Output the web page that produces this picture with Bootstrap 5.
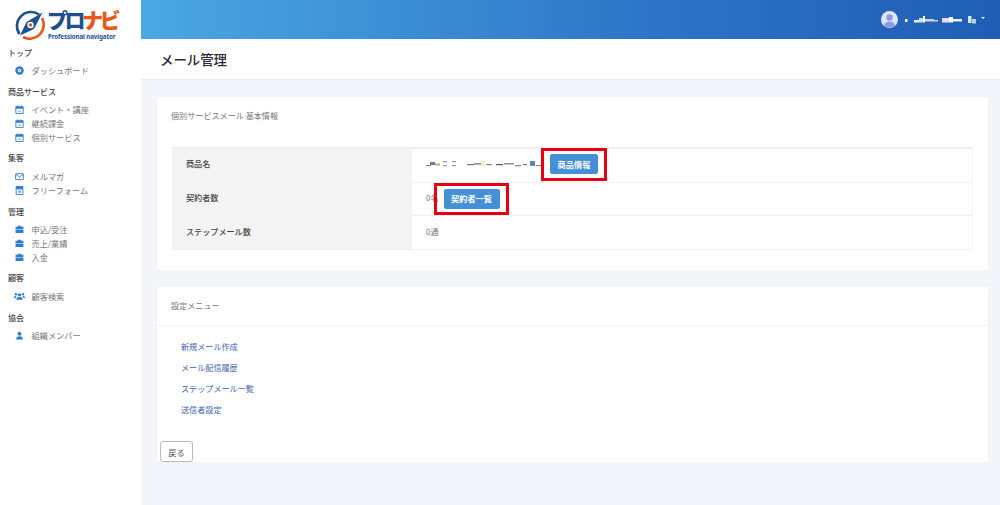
<!DOCTYPE html>
<html lang="ja">
<head>
<meta charset="utf-8">
<title>メール管理</title>
<link rel="stylesheet" href="https://cdn.jsdelivr.net/npm/bootstrap@5.3.0/dist/css/bootstrap.min.css">
<style>
html,body{height:100%;}
body{font-family:"Noto Sans CJK JP","Noto Sans",sans-serif;font-size:8.2px;background:#f3f5fa;color:#555;overflow:hidden;}
.shell{height:505px;}
.side{width:141px;flex:none;background:#fff;height:505px;}
.logo-wrap{height:46px;padding:9px 0 0 15px;}
.sec-title{height:14px;line-height:14px;padding-left:8px;color:#444;font-size:8px;font-weight:500;margin-bottom:3px;}
.sec-title.wide-gap{margin-bottom:4px;}
.sec{margin-bottom:7px;}
.sec.wide-sec{margin-bottom:8px;}
.side-item{height:14px;line-height:14px;padding-left:15px;color:#777;font-size:8.2px;}
.side-item svg{width:9px;height:9px;margin-right:7.5px;flex:none;}
.main-area{min-width:0;}
.topbar{height:39px;background:linear-gradient(90deg,#4aa8e2 0%,#2d74c6 60%,#1f5db5 100%);padding-right:15px;}
.pagehead{height:41px;background:#fff;padding-left:19px;border-bottom:1px solid #eceef3;}
.pagehead h1{font-size:13.4px;margin:0;color:#2a2a3c;font-weight:500;}
.panel{background:#fff;margin:0 12px 0 16px;border:0;border-radius:0;box-shadow:0 0 3px rgba(0,0,0,.03);position:relative;}
.panel-a{margin-top:17px;height:173px;padding:12px 15px 0;}
.panel-b{margin-top:17px;height:175px;}
.panel-cap{color:#777;font-size:8.1px;line-height:14px;margin-left:-1px;}
.info-tbl{margin:24px 0 0;width:801px;font-size:8.1px;border-top:2px solid #eee;border-bottom:1px solid #eee;}
.info-tbl th,.info-tbl td{height:34px;padding:0 0 0 14px;vertical-align:middle;border-bottom:1px solid #f0f0f0;color:#777;font-weight:400;box-shadow:none;}
.info-tbl tr:first-child th,.info-tbl tr:first-child td{padding-bottom:2px;}
.info-tbl tr:nth-child(2) th,.info-tbl tr:nth-child(2) td{height:33px;}
.info-tbl th{width:240px;background:#f4f4f4;color:#444;font-weight:500;border-bottom:0;}
.info-tbl tr td:last-child{border-right:1px solid #f3f3f3;}
.act-btn{background:#448fd6;border:1px solid #448fd6;color:#fff;font-size:8.2px;font-weight:700;padding:0;width:48px;height:20px;line-height:17px;border-radius:2px;margin-left:5px;}
.act-wide{width:56px;}
.blur-name{width:119px;height:12px;}
.hilite{position:absolute;border:3px solid #e60012;pointer-events:none;}
.h1box{left:384px;top:51px;width:66px;height:33px;}
.h2box{left:277px;top:86px;width:75px;height:32px;}
.cap-b{height:39px;padding-left:14px;border-bottom:1px solid #f3f3f5;line-height:38px;color:#777;font-size:8.1px;}
.link-col{padding:10px 0 0 24px;}
.link-col a{display:block;height:21px;line-height:21px;color:#3d62ae;text-decoration:none;font-size:8.1px;}
.back-btn{position:absolute;left:3px;top:154px;width:33px;height:21px;padding:0;background:#fff;border:1px solid #bbb;border-radius:3px;color:#555;font-size:8.2px;line-height:18px;}
.user-name{width:72px;height:10px;margin:0 4px 0 7px;}
.caret-s{width:0;height:0;border-left:2.5px solid transparent;border-right:2.5px solid transparent;border-top:2.5px solid #fff;margin-bottom:3px;}
.logo-text{line-height:1;margin-left:2px;}
.logo-main{font-family:"Noto Sans CJK JP",sans-serif;font-weight:900;font-size:21px;letter-spacing:-3.4px;line-height:21px;height:21px;white-space:nowrap;margin-left:-1px;}
.logo-main .c1{color:#1d4f91;}
.logo-main .c2{color:#e8561a;}
.logo-sub{font-family:"Noto Sans","Liberation Sans",sans-serif;font-size:6.2px;font-weight:700;color:#1d4f91;line-height:8px;white-space:nowrap;letter-spacing:-.1px;margin-top:3px;}
</style>
</head>
<body>
<div class="shell d-flex">
  <aside class="side">
    <div class="logo-wrap d-flex align-items-start">
      <svg width="31" height="31" viewBox="0 0 31 31">
        <path d="M24 5.500A14 14 0 0 0 4.500 25" fill="none" stroke="#1d4f91" stroke-width="2.600"/>
        <path d="M27 9A14 14 0 0 1 8 28" fill="none" stroke="#e8561a" stroke-width="2.600"/>
        <polygon points="27.500,3.500 19,20 11.500,13" fill="#1d4f91"/>
        <polygon points="19,20 11.500,13 5,26.500" fill="#1d4f91"/>
        <circle cx="15.500" cy="16" r="3.200" fill="#fff"/>
        <circle cx="15.500" cy="16" r="1.800" fill="#e8561a"/>
      </svg>
      <div class="logo-text">
        <div class="logo-main"><span class="c1">プロ</span><span class="c2">ナビ</span></div>
        <div class="logo-sub">Professional navigator</div>
      </div>
    </div>
    <div class="sec wide-sec"><div class="sec-title">トップ</div>
      <div class="side-item d-flex align-items-center"><svg viewBox="0 0 16 16"><circle cx="8" cy="8" r="7.500" fill="#2f7fd1"/><circle cx="8" cy="8" r="3" fill="#fff"/><circle cx="8" cy="8" r="1.200" fill="#2f7fd1"/></svg>ダッシュボード</div>
    </div>
    <div class="sec"><div class="sec-title">商品サービス</div>
      <div class="side-item d-flex align-items-center"><svg viewBox="0 0 16 16"><path d="M1.500 3h13v12h-13z" fill="none" stroke="#2f7fd1" stroke-width="1.600"/><path d="M1.500 3h13v3.500h-13zM4 1h2v3H4zM10 1h2v3h-2z" fill="#2f7fd1"/><path d="M5 10h6v2H5z" fill="#7fb2e5"/></svg>イベント・講座</div>
      <div class="side-item d-flex align-items-center"><svg viewBox="0 0 16 16"><path d="M1.500 3h13v12h-13z" fill="none" stroke="#2f7fd1" stroke-width="1.600"/><path d="M1.500 3h13v3.500h-13zM4 1h2v3H4zM10 1h2v3h-2z" fill="#2f7fd1"/><path d="M5 10h6v2H5z" fill="#7fb2e5"/></svg>継続課金</div>
      <div class="side-item d-flex align-items-center"><svg viewBox="0 0 16 16"><path d="M1.500 3h13v12h-13z" fill="none" stroke="#2f7fd1" stroke-width="1.600"/><path d="M1.500 3h13v3.500h-13zM4 1h2v3H4zM10 1h2v3h-2z" fill="#2f7fd1"/><path d="M5 10h6v2H5z" fill="#7fb2e5"/></svg>個別サービス</div>
    </div>
    <div class="sec wide-sec"><div class="sec-title wide-gap">集客</div>
      <div class="side-item d-flex align-items-center"><svg viewBox="0 0 16 16"><rect x="1" y="3" width="14" height="10.500" rx="1" fill="none" stroke="#2f7fd1" stroke-width="1.600"/><path d="M1.500 4l6.500 5 6.500-5" fill="none" stroke="#2f7fd1" stroke-width="1.600"/></svg>メルマガ</div>
      <div class="side-item d-flex align-items-center"><svg viewBox="0 0 16 16"><rect x="2" y="1" width="12" height="14" fill="none" stroke="#2f7fd1" stroke-width="1.600"/><rect x="2" y="1" width="12" height="5" fill="#2f7fd1"/><rect x="5" y="8" width="6" height="4" fill="#7fb2e5"/></svg>フリーフォーム</div>
    </div>
    <div class="sec"><div class="sec-title">管理</div>
      <div class="side-item d-flex align-items-center"><svg viewBox="0 0 16 16"><path d="M5 3V1.500h6V3h4v4.500H1V3zM1 8.500h14V14H1z" fill="#2f7fd1"/></svg>申込/受注</div>
      <div class="side-item d-flex align-items-center"><svg viewBox="0 0 16 16"><path d="M5 3V1.500h6V3h4v4.500H1V3zM1 8.500h14V14H1z" fill="#2f7fd1"/></svg>売上/業績</div>
      <div class="side-item d-flex align-items-center"><svg viewBox="0 0 16 16"><path d="M5 3V1.500h6V3h4v4.500H1V3zM1 8.500h14V14H1z" fill="#2f7fd1"/></svg>入金</div>
    </div>
    <div class="sec wide-sec"><div class="sec-title wide-gap">顧客</div>
      <div class="side-item d-flex align-items-center" style="padding-left:14px"><svg viewBox="0 0 20 16" style="width:11px;margin-right:6.500px"><circle cx="10" cy="5" r="3" fill="#2f7fd1"/><path d="M4 14c0-4 3-5 6-5s6 1 6 5z" fill="#2f7fd1"/><circle cx="3.500" cy="4" r="2.200" fill="#2f7fd1"/><circle cx="16.500" cy="4" r="2.200" fill="#2f7fd1"/><path d="M0 10c0-2 1.500-3 3.500-3l1 1-2 3H0zM20 10c0-2-1.500-3-3.500-3l-1 1 2 3H20z" fill="#2f7fd1"/></svg>顧客検索</div>
    </div>
    <div class="sec"><div class="sec-title">協会</div>
      <div class="side-item d-flex align-items-center"><svg viewBox="0 0 16 16"><circle cx="8" cy="5" r="3.600" fill="#2f7fd1"/><path d="M2 15c0-4 2.500-5.500 6-5.500s6 1.500 6 5.500z" fill="#2f7fd1"/></svg>組織メンバー</div>
    </div>
  </aside>
  <div class="main-area flex-grow-1">
    <header class="topbar d-flex align-items-center justify-content-end">
      <svg width="17" height="17" viewBox="0 0 17 17"><circle cx="8.500" cy="8.500" r="8.500" fill="#dfe3f7"/><circle cx="8.500" cy="6.500" r="3.200" fill="#8c9be0"/><path d="M3 14.500c.6-3 3-4 5.500-4s4.900 1 5.500 4a8.500 8.500 0 0 1-11 0z" fill="#8c9be0"/></svg>
      <svg class="user-name" viewBox="0 0 72 10" aria-hidden="true"><g fill="#fff"><rect x="0" y="4" width="2.500" height="3"/><rect x="9" y="5" width="5" height="2.500" opacity=".9"/><rect x="14" y="3" width="4" height="4.500" fill="#cfe0f5"/><rect x="18" y="1" width="2" height="6.500"/><rect x="20" y="4" width="9" height="2.500" fill="#e2c9e8"/><rect x="29" y="5" width="4" height="1.500" fill="#f2c9d8"/><rect x="37" y="3" width="7" height="4.500" fill="#f0d8ee"/><rect x="44" y="2" width="4" height="5.500"/><rect x="48" y="4" width="9" height="2.500" opacity=".9"/><rect x="63" y="1" width="3.500" height="7" fill="#cfe8ff"/><rect x="67" y="4" width="4" height="4.500" opacity=".7"/></g></svg>
      <span class="caret-s"></span>
    </header>
    <div class="pagehead d-flex align-items-center"><h1>メール管理</h1></div>
    <section class="panel panel-a">
      <div class="panel-cap">個別サービスメール 基本情報</div>
      <table class="info-tbl">
        <tbody>
          <tr><th>商品名</th><td><div class="d-flex align-items-center">
            <svg class="blur-name" viewBox="0 0 119 12" aria-hidden="true"><g><rect x="0" y="7" width="5" height="1.200" fill="#888"/><rect x="4" y="4" width="5" height="3" fill="#667aa8"/><rect x="9" y="5.500" width="5" height="2" fill="#d99a7a"/><rect x="17" y="3" width="4" height="1.200" fill="#999"/><rect x="17" y="7" width="4" height="1.200" fill="#999"/><rect x="26" y="3" width="4" height="1.200" fill="#999"/><rect x="26" y="7" width="4" height="1.200" fill="#999"/><rect x="41" y="6" width="7" height="1.200" fill="#777"/><rect x="48" y="5" width="7" height="1.800" fill="#99a"/><rect x="55" y="3" width="4" height="5.500" fill="#f5f0c0"/><rect x="60" y="6" width="6" height="1.200" fill="#789"/><rect x="70" y="6" width="7" height="1.200" fill="#555"/><rect x="78" y="5" width="10" height="1.500" fill="#a88"/><rect x="89" y="7" width="6" height="1.200" fill="#888"/><rect x="97" y="6" width="4" height="1.200" fill="#777"/><rect x="104" y="3" width="5" height="5" fill="#5a86c0"/><rect x="110" y="7" width="8" height="1.200" fill="#889"/></g></svg>
            <button type="button" class="btn act-btn">商品情報</button></div></td></tr>
          <tr><th>契約者数</th><td><div class="d-flex align-items-center"><span>0名</span><button type="button" class="btn act-btn act-wide">契約者一覧</button></div></td></tr>
          <tr><th>ステップメール数</th><td>0通</td></tr>
        </tbody>
      </table>
      <div class="hilite h1box"></div>
      <div class="hilite h2box"></div>
    </section>
    <section class="panel panel-b">
      <div class="cap-b">設定メニュー</div>
      <div class="link-col">
        <a href="#">新規メール作成</a>
        <a href="#">メール配信履歴</a>
        <a href="#">ステップメール一覧</a>
        <a href="#">送信者設定</a>
      </div>
      <button type="button" class="btn back-btn">戻る</button>
    </section>
  </div>
</div>
<script src="https://cdn.jsdelivr.net/npm/bootstrap@5.3.0/dist/js/bootstrap.bundle.min.js"></script>
</body>
</html>
